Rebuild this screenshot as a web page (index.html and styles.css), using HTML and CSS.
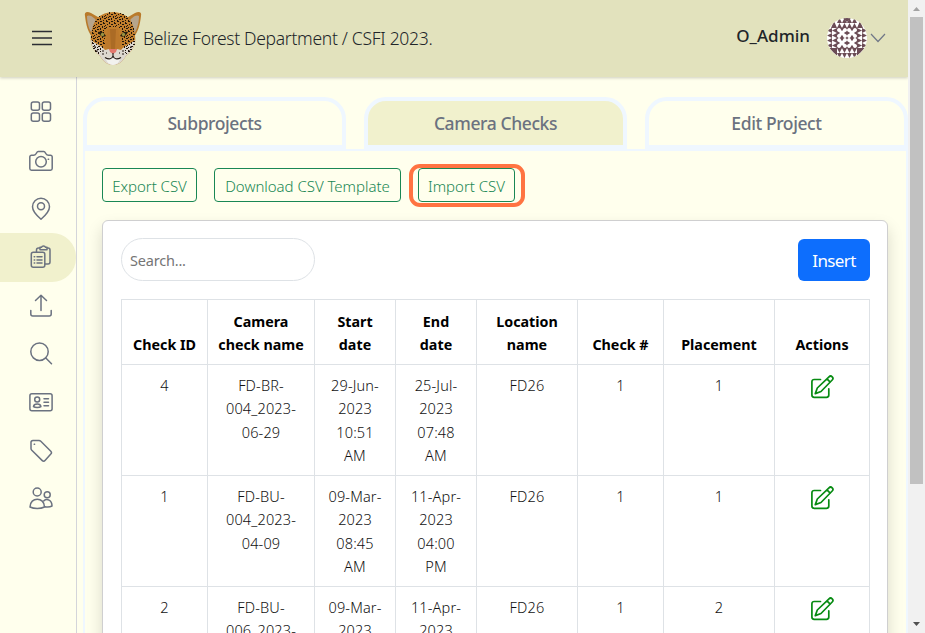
FILE: index.html
```html
<!DOCTYPE html>
<html lang="en">
<head>
<meta charset="utf-8">
<title>Camera Checks</title>
<link rel="stylesheet" href="styles.css">
</head>
<body>
<svg width="0" height="0" class="defs" aria-hidden="true">
  <defs>
    <symbol id="edit" viewBox="0 0 24 24">
      <path d="M10.500 4.500H4.200a2.300 2.300 0 0 0-2.300 2.300v13.200a2.300 2.300 0 0 0 2.300 2.300h12.300a2.300 2.300 0 0 0 2.300-2.300V13.800"/>
      <path d="M19 1.800a2.200 2.200 0 0 1 3.200 3.200L11 16.500 5.300 18.600 7.300 13z M17 3.900l3.200 3.200"/>
    </symbol>
    <pattern id="spots" width="11" height="10" patternUnits="userSpaceOnUse">
      <path d="M0 0h2v1H0zM3 1h1v2H3zM5 0h2v1H5zM8 1h1v1h1v1H8zM1 3h1v1H1zM5 3h2v1H5zM10 4h1v1h-1zM3 5h2v1H3zM7 5h1v2H7zM0 6h1v1H0zM9 7h2v1H9zM2 8h2v1H2zM5 7h1v2H5zM8 9h1v1H8zM0 9h1v1H0zM9 5h1v1H9zM2 6h1v1H2z" fill="#20160b"/>
    </pattern>
    <g id="star"><path d="M3 0h4L5 3.200zM0 3v4l3.200-2zM10 3v4L6.800 5zM3 10h4L5 6.800zM0 0h1.300L0 1.300zM10 0v1.300L8.700 0zM0 10V8.700L1.300 10zM10 10H8.700L10 8.700z"/></g>
    <g id="tri"><path d="M0 5 2.500 0 5 5zM5 5 7.500 0 10 5zM0 10 2.500 5 5 10zM5 10 7.500 5 10 10z"/></g>
  </defs>
</svg>
<div class="window">
  <div class="app">
    <header class="topbar">
      <svg class="burger" width="20" height="16" viewBox="0 0 20 16"><path d="M0 1.500h20M0 8h20M0 14.500h20"/></svg>
      <svg class="logo" width="58" height="56" viewBox="0 0 58 56">
        <path d="M1 5C0 1 3 0 7 2l12 7-9 19C4 22 2 14 1 5z" fill="#b97a2b"/>
        <path d="M3 5c3-2 8 2 11 7l-5 12C5 19 3 12 3 5z" fill="#b7a58c"/>
        <path d="M57 5c1-4-2-5-6-3L39 9l9 19c6-6 8-14 9-23z" fill="#b97a2b"/>
        <path d="M55 5c-3-2-8 2-11 7l5 12c4-5 6-12 6-19z" fill="#b7a58c"/>
        <path d="M13 7C22-1 36-1 45 7c5 7 7 17 6 25-1 5-5 10-9 13-3 5-7 9-13 9s-10-4-13-9c-4-3-8-8-9-13C6 24 8 14 13 7z" fill="#c17e2c"/>
        <path d="M7 29c4 4 10 5 14 10l8-2 8 2c4-5 10-6 14-10 0 7-4 12-9 16-3 5-7 9-13 9s-10-4-13-9c-5-4-9-9-9-16z" fill="#ddd8d0"/>
        <path shape-rendering="crispEdges" d="M13 7C22-1 36-1 45 7c5 7 7 17 6 25-1 5-4 9-8 12l-6-10 1-14-4-4H24l-4 4 1 14-6 10c-4-3-7-7-8-12C6 24 8 14 13 7z" fill="url(#spots)"/>
        <path d="M24 18h10l3 17-5 4h-6l-5-4z" fill="#bd792c"/>
        <path d="M26 18h6l-1 20h-4z" fill="#ab6b25"/>
        <path d="M14 21c3-1 6 0 8 4-3 2-6 0-8-4zM44 21c-3-1-6 0-8 4 3 2 6 0 8-4z" fill="#28200e"/>
        <circle cx="18.500" cy="23.500" r="1.700" fill="#999342"/><circle cx="39.500" cy="23.500" r="1.700" fill="#999342"/>
        <path d="M25 38h8l-1 3-3 2-3-2z" fill="#e2776d"/>
        <path d="M21 47c3 0 7 0 8-2 1 2 5 2 8 2l-3 5q-5 4-10 0z" fill="#f2f2ee"/>
        <path d="M29 42v4M21 46.500c4 2.500 7 1.500 8-1.500 1 3 4 4 8 1.500" fill="none" stroke="#241b16" stroke-width="1.100"/>
        <path d="M18 40h2M18 43h2M38 40h2M38 43h2M22 42h1M35 42h1M10 36h2M46 36h2M12 40h2M44 40h2" stroke="#241b16"/>
      </svg>
      <h1 class="title">Belize Forest Department / CSFI 2023.</h1>
      <div class="user">
        <span class="user-name">O_Admin</span>
        <svg class="avatar" width="40" height="40" viewBox="0 0 40 40">
          <rect width="40" height="40" fill="#fff"/>
          <g fill="#6b4c55">
            <use href="#star" x="10" y="10"/><use href="#star" x="20" y="10"/><use href="#star" x="10" y="20"/><use href="#star" x="20" y="20"/>
            <use href="#tri" x="10" y="0"/><use href="#tri" x="20" y="0"/>
            <use href="#tri" transform="translate(10 40) scale(1 -1)"/><use href="#tri" transform="translate(20 40) scale(1 -1)"/>
            <use href="#tri" transform="translate(0 20) rotate(-90)"/><use href="#tri" transform="translate(0 30) rotate(-90)"/>
            <use href="#tri" transform="translate(40 10) rotate(90)"/><use href="#tri" transform="translate(40 20) rotate(90)"/>
            <path d="M4 10 7 3l3 7zM30 10l3-7 3 7zM2 30h8v8zM38 30h-8v8zM16 0h8l-4 4z"/>
          </g>
          <path d="M10 10h20v20H10zM20 10v20M10 20h20" fill="none" stroke="#6b4c55" stroke-opacity=".35" stroke-width=".8"/>
        </svg>
        <svg class="chevron" width="16" height="10" viewBox="0 0 16 10"><path d="m1 1 7 7.500L15 1"/></svg>
      </div>
    </header>
    <div class="body">
      <nav class="side">
        <a class="item"><svg viewBox="0 0 24 24"><rect x="2.300" y="2" width="8.200" height="8.200" rx="2"/><rect x="13.300" y="2" width="8.200" height="8.200" rx="2"/><rect x="2.300" y="13" width="8.200" height="8.200" rx="2"/><rect x="13.300" y="13" width="8.200" height="8.200" rx="2"/></svg></a>
        <a class="item"><svg viewBox="0 0 24 24"><path d="M2.500 6.300H4.500c1.500 0 2.200-1 2.800-2 .5-.9 1-1.800 2-1.800h5.400c1 0 1.500.9 2 1.800.6 1 1.300 2 2.800 2h2a1.700 1.700 0 0 1 1.700 1.700v11.500a1.700 1.700 0 0 1-1.700 1.700h-19A1.700 1.700 0 0 1 .8 19.500V8a1.700 1.700 0 0 1 1.700-1.700z"/><circle cx="12" cy="12.700" r="5.300"/><path d="M19.200 10.200h.4"/></svg></a>
        <a class="item"><svg viewBox="0 0 24 24"><path d="M12 22.300C7 18 3.500 14 3.500 9.800a8.500 8.500 0 0 1 17 0c0 4.200-3.500 8.200-8.500 12.500z"/><circle cx="12" cy="9.300" r="3.500"/></svg></a>
        <a class="item active"><svg viewBox="0 0 24 24"><rect x="2.300" y="7.200" width="13.500" height="15" rx="2"/><path d="M7.500 6.800V5a2 2 0 0 1 2-2H11M18 3h1a2 2 0 0 1 2 2v12a2 2 0 0 1-2 2h-3M11 2.200h1.500c.6-1.700 3.400-1.700 4 0H18v2.500h-7zM5.200 11.700h.5M5.200 14.900h.5M5.200 18.100h.5M8 11.700h5M8 14.900h5M8 18.100h5"/></svg></a>
        <a class="item"><svg viewBox="0 0 24 24"><path d="M12 16.500V1.500M6.500 6.500 12 1.300l5.500 5.200M1.800 16.500V20a2 2 0 0 0 2 2h16.400a2 2 0 0 0 2-2v-3.500"/></svg></a>
        <a class="item"><svg viewBox="0 0 24 24"><circle cx="10.500" cy="9.700" r="8.700"/><path d="m16.800 16 5.700 5.700"/></svg></a>
        <a class="item"><svg viewBox="0 0 24 24"><rect x=".9" y="2.700" width="22.200" height="17" rx="2"/><circle cx="8.200" cy="8.400" r="2.500"/><path d="M4.500 15.700c.5-3.500 6.900-3.500 7.400 0-1.500 1.200-5.900 1.200-7.400 0zM15 7.700h4.500M15 11.200h4.500M15 14.700h4.500"/></svg></a>
        <a class="item"><svg viewBox="0 0 24 24"><path d="M2 3.600A1.900 1.900 0 0 1 3.900 1.500H10c.7 0 1.300.3 1.800.8l10 10c.8.8.8 1.900 0 2.700L16 21.500c-.8.900-1.900.9-2.700.1L2.800 11.300C2.300 10.800 2 10.200 2 9.500zM5.200 5.300h.4"/></svg></a>
        <a class="item"><svg viewBox="0 0 24 24"><circle cx="8.200" cy="5" r="4"/><circle cx="18.200" cy="7.700" r="3"/><path d="M1 20c0-10.500 14.500-10.500 14.500 0-4 2-10.500 2-14.500 0zM14.800 13.800c3-2.500 8.200-1 8.200 5.200-1.800 1.100-4.500 1.200-7 .8"/></svg></a>
      </nav>
      <main class="main">
        <div class="tabs">
          <a class="tab">Subprojects</a>
          <a class="tab current">Camera Checks</a>
          <a class="tab">Edit Project</a>
        </div>
        <section class="panel">
          <div class="actions">
            <button class="outline export">Export CSV</button>
            <button class="outline template">Download CSV Template</button>
            <button class="outline import">Import CSV</button>
          </div>
          <div class="card">
            <div class="tools">
              <input class="search" type="text" placeholder="Search...">
              <button class="insert">Insert</button>
            </div>
            <table class="checks">
              <colgroup><col class="c-id"><col class="c-name"><col class="c-date"><col class="c-date"><col class="c-loc"><col class="c-num"><col class="c-place"><col class="c-act"></colgroup>
              <thead>
                <tr><th>Check ID</th><th>Camera<br>check name</th><th>Start<br>date</th><th>End<br>date</th><th>Location<br>name</th><th>Check #</th><th>Placement</th><th>Actions</th></tr>
              </thead>
              <tbody>
                <tr><td>4</td><td>FD-BR-<br>004_2023-<br>06-29</td><td>29-Jun-<br>2023<br>10:51<br>AM</td><td>25-Jul-<br>2023<br>07:48<br>AM</td><td>FD26</td><td>1</td><td>1</td><td><svg class="edit"><use href="#edit"/></svg></td></tr>
                <tr><td>1</td><td>FD-BU-<br>004_2023-<br>04-09</td><td>09-Mar-<br>2023<br>08:45<br>AM</td><td>11-Apr-<br>2023<br>04:00<br>PM</td><td>FD26</td><td>1</td><td>1</td><td><svg class="edit"><use href="#edit"/></svg></td></tr>
                <tr><td>2</td><td>FD-BU-<br>006_2023-</td><td>09-Mar-<br>2023</td><td>11-Apr-<br>2023</td><td>FD26</td><td>1</td><td>2</td><td><svg class="edit"><use href="#edit"/></svg></td></tr>
              </tbody>
            </table>
          </div>
        </section>
      </main>
    </div>
  </div>
  <div class="scrollbar">
    <svg width="7" height="4" viewBox="0 0 7 4"><path d="M0 4 3.500 0 7 4z" fill="#a3a3a3"/></svg>
    <div class="thumb"></div>
    <svg width="7" height="4" viewBox="0 0 7 4"><path d="M0 0h7L3.500 4z" fill="#505050"/></svg>
  </div>
</div>
</body>
</html>
```
FILE: styles.css
```css
* { box-sizing: border-box; }
body { margin: 0; overflow: hidden; background: #ffffed; font-family: "Noto Sans", "Open Sans", sans-serif; color: #212529; }
.defs { position: absolute; }
.window { display: flex; height: 633px; overflow: hidden; }
.app { width: 908px; display: flex; flex-direction: column; overflow: hidden; }
.topbar { height: 77px; flex: none; display: flex; align-items: center; background: #e2e2bd; box-shadow: 0 1px 3px rgba(0,0,0,.2); padding: 0 22px 0 32px; position: relative; }
.burger { fill: none; stroke: #2b2d33; stroke-width: 1.700; margin: -1px 32px 0 0; }
.logo { margin-right: 1px; }
.title { margin: -2px 0 0; font-size: 17.500px; font-weight: 350; white-space: nowrap; letter-spacing: -.3px; color: #212529; }
.user { margin-left: auto; display: flex; align-items: center; margin-top: -1px; }
.user-name { font-size: 17px; font-weight: 500; margin: -5px 17px 0 0; }
.avatar { border-radius: 50%; }
.chevron { fill: none; stroke: #707787; stroke-width: 1.200; margin-left: 3px; }
.body { flex: 1; display: flex; min-height: 0; }
.side { width: 77px; flex: none; border-right: 1px solid #d4d5da; padding-top: 11px; }
.item { height: 48.400px; display: flex; align-items: center; padding-left: 29px; border-radius: 0 24px 24px 0; }
.item svg { width: 24px; height: 24px; fill: none; stroke: #6b7280; stroke-width: 1.500; stroke-linecap: round; stroke-linejoin: round; }
.active { background: #f1f1cd; }
.main { flex: 1; padding: 20px 0 0 6px; min-width: 0; }
.tabs { display: flex; gap: 18px; }
.tab { flex: 1; height: 52px; border: 4px solid #eff7ff; border-radius: 22px 22px 0 0; display: flex; align-items: center; justify-content: center; color: #6b7280; font-size: 17.500px; font-weight: 500; letter-spacing: -.4px; white-space: nowrap; }
.current { background: #f1f1cd; }
.panel { border: 2px solid #eff7ff; padding: 17px 18px 0 17px; height: 700px; }
.actions { display: flex; gap: 17px; margin-bottom: 18px; }
.outline { height: 34px; padding: 2px 0 0; border: 1px solid #198754; border-radius: 4px; background: none; color: #198754; font: 350 15px "Noto Sans", sans-serif; letter-spacing: -.03px; white-space: nowrap; }
.export { width: 95px; }
.template { width: 187px; }
.import { width: 97px; position: relative; }
.import::after { content: ""; position: absolute; inset: -5px -11px -6px -10px; border: 4px solid #ff7442; border-radius: 11px; }
.card { width: 786px; height: 600px; background: #fff; border: 1px solid #cfcfd0; border-radius: 6px; box-shadow: 0 8px 16px rgba(0,0,0,.15); padding: 17px 17px 0 18px; }
.tools { display: flex; justify-content: space-between; align-items: flex-end; margin-bottom: 18px; }
.search { width: 194px; height: 43px; padding: 1px 8px 0; border: 1px solid #dee2e6; border-radius: 22px; font: 14.500px "Noto Sans", sans-serif; letter-spacing: -.2px; background: #fff; }
.search::placeholder { color: #757575; }
.insert { width: 72px; height: 42px; border: 0; border-radius: 6px; background: #0d6efd; color: #fff; font: 17px "Noto Sans", sans-serif; letter-spacing: -.6px; padding: 1px 0 0; }
.checks { table-layout: fixed; width: 749px; border-collapse: collapse; font-size: 14.500px; line-height: 23.400px; text-align: center; color: #000; }
.c-id { width: 86px; } .c-name { width: 107px; } .c-date { width: 81px; } .c-loc { width: 101px; } .c-num { width: 86px; } .c-place { width: 111px; } .c-act { width: 95px; }
th, td { border: 1px solid #dee2e6; padding: 8px 0; white-space: nowrap; }
th { height: 65px; vertical-align: bottom; font-size: 14.300px; font-weight: 700; line-height: 23px; }
td { height: 111px; vertical-align: top; padding-top: 8.800px; padding-bottom: 7px; font-weight: 350; letter-spacing: .15px; color: #111; }
.edit { width: 24px; height: 24px; display: block; margin: 1px auto 0; fill: none; stroke: #078b12; stroke-width: 1.700; stroke-linejoin: round; stroke-linecap: round; }
.scrollbar { width: 17px; background: #f1f1f1; display: flex; flex-direction: column; align-items: center; padding: 7px 0; }
.thumb { width: 13px; height: 467px; margin: 6px 0 auto; background: #c1c1c1; }
```
